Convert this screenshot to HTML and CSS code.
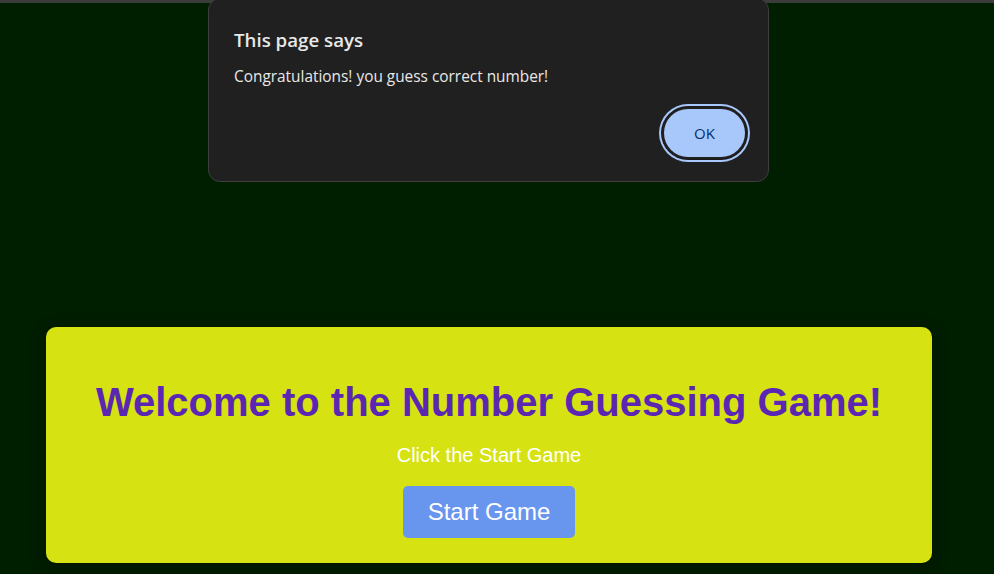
FILE: index.html
```html
<!DOCTYPE html>
<html lang="en">
<head>
<meta charset="utf-8">
<title>Number Guessing Game</title>
<link rel="stylesheet" href="styles.css">
</head>
<body>
<div class="topbar"></div>
<main class="card">
  <h1 class="title">Welcome to the Number Guessing Game!</h1>
  <p class="hint">Click the Start Game</p>
  <button class="start">Start Game</button>
</main>
<div class="dialog" role="alertdialog">
  <div class="dialog-title">This page says</div>
  <div class="dialog-msg">Congratulations! you guess correct number!</div>
  <div class="dialog-actions">
    <button class="ok">OK</button>
  </div>
</div>
</body>
</html>
```

FILE: styles.css
```css
html, body {
  margin: 0;
  padding: 0;
}
body {
  background: #001e00;
  height: 574px;
  overflow: hidden;
  font-family: "Liberation Sans", Arial, sans-serif;
}
.topbar {
  height: 3px;
  background: #3c3c3c;
}
.card {
  margin: 324px 0 0 46px;
  width: 886px;
  box-sizing: border-box;
  height: 236px;
  padding: 52px 0 0;
  background: #d6e212;
  border-radius: 10px;
  box-shadow: 0 4px 16px rgba(0, 0, 0, 0.35);
  display: flex;
  flex-direction: column;
  align-items: center;
}
.title {
  margin: 0;
  font-size: 40px;
  font-weight: 700;
  color: #5b27b2;
  line-height: 46px;
}
.hint {
  margin: 19px 0;
  font-size: 20px;
  line-height: 23px;
  color: #ffffff;
}
.start {
  font-family: "Liberation Sans", Arial, sans-serif;
  font-size: 24px;
  line-height: 28px;
  color: #ffffff;
  background: #6895ed;
  border: none;
  border-radius: 5px;
  padding: 12px 25px;
}
.dialog {
  position: absolute;
  left: 208px;
  top: -2px;
  width: 561px;
  height: 184px;
  box-sizing: border-box;
  background: #202020;
  border: 1px solid #3e3e3e;
  border-radius: 12px;
  padding: 30px 21px 0 25px;
  font-family: "Open Sans", "Noto Sans", sans-serif;
  color: #e8e8e8;
  display: flex;
  flex-direction: column;
}
.dialog-title {
  font-size: 18.7px;
  font-weight: 600;
  line-height: 22px;
}
.dialog-msg {
  margin-top: 16px;
  font-size: 15.4px;
  line-height: 20px;
}
.dialog-actions {
  display: flex;
  justify-content: flex-end;
  margin-top: 22px;
}
.ok {
  width: 81px;
  height: 48px;
  margin-right: 2px;
  border: none;
  border-radius: 24px;
  background: #a8c7fa;
  color: #062e6f;
  font-family: "Open Sans", "Noto Sans", sans-serif;
  font-size: 15px;
  box-shadow: 0 0 0 2px #202020, 0 0 0 3px #1a1a1a, 0 0 0 5px #a8c7fa;
}
```
